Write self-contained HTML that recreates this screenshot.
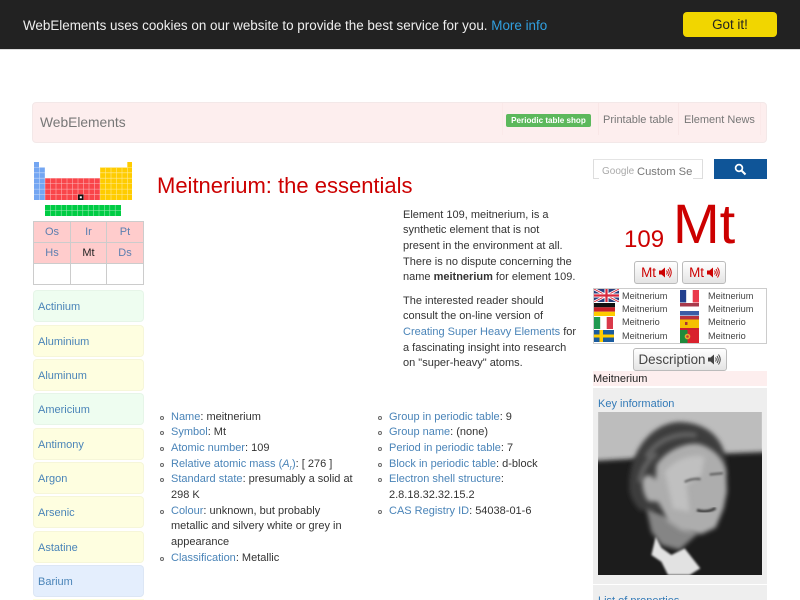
<!DOCTYPE html>
<html lang="en"><head><meta charset="utf-8"><title>Meitnerium: the essentials</title>
<style>
html,body{margin:0;padding:0;background:#fff;width:800px;height:600px;overflow:hidden}
body{font-family:"Liberation Sans",sans-serif;font-size:11px;color:#333;position:relative}
#wrap{position:absolute;left:0;top:0;width:800px;height:600px;overflow:hidden}
a{color:#337ab7;text-decoration:none}
.a{position:absolute;white-space:nowrap}
#bar{position:absolute;left:0;top:0;width:800px;height:49px;background:#222;border-bottom:1px solid #ddd}
#msg{left:23px;font-size:13.43px;color:#eee;line-height:18px}
#msg a{color:#31a0e0}
#got{left:683px;top:12px;width:94px;height:25px;box-sizing:border-box;background:#f1d600;border-radius:4px;text-align:center;line-height:25px;font-size:13.4px;color:#222}
#nav{position:absolute;left:32px;top:102px;width:733px;height:39px;background:#fdeeee;border:1px solid #f3e8e8;border-radius:4px}
.el{position:absolute;left:33px;width:109px;height:30px;border:1px solid rgba(0,0,0,.03);border-radius:4px;font-size:11px;line-height:32px;text-indent:4px;color:#4a84b8}
.pt{position:absolute;left:33px;top:221px;width:109px;height:62px;border:1px solid #ccc;background:#fff}
.c{position:absolute;height:20px;text-align:center;line-height:21.500px;font-size:11px;color:#5c7fb0;border-right:1px solid #ccc;border-bottom:1px solid #ccc;background:#fcc}
ul{position:absolute;margin:0;padding:0;list-style:none;font-size:11px;line-height:15.7px;color:#333}
li{position:relative}
li:before{content:"";position:absolute;left:-11px;top:6px;width:2px;height:2px;border:1px solid #666;border-radius:50%}
li a{color:#4a84b8}
.btn{position:absolute;background:linear-gradient(#fff,#e4e4e4);border:1px solid #bbb;border-radius:3px;box-sizing:border-box;text-align:center;color:#c00;white-space:nowrap}
.fl{position:absolute}
.nm{position:absolute;font-size:9.2px;color:#444;white-space:nowrap;line-height:13px}
</style></head>
<body>
<div id="wrap">
<div id="bar"></div>
<div id="msg" class="a" style="top:16.500px">WebElements uses cookies on our website to provide the best service for you. <a>More info</a></div>
<div id="got" class="a">Got it!</div>

<div id="nav"></div>
<div class="a" style="left:40px;top:114px;font-size:13.8px;color:#777;line-height:17px">WebElements</div>
<div class="a" style="left:506px;top:114px;height:13px;width:85px;background:#5cb85c;border-radius:2px;color:#fff;font-size:8.1px;font-weight:bold;text-align:center;line-height:13px">Periodic table shop</div>
<div class="a" style="left:603px;top:112.500px;font-size:11px;color:#777;line-height:15px">Printable table</div>
<div class="a" style="left:684px;top:112.500px;font-size:11px;color:#777;line-height:15px">Element News</div>
<div class="a" style="left:502px;top:103px;width:1px;height:32px;background:#fbe9e9"></div>
<div class="a" style="left:598px;top:103px;width:1px;height:32px;background:#f9e6e6"></div>
<div class="a" style="left:678px;top:103px;width:1px;height:32px;background:#f9e6e6"></div>
<div class="a" style="left:760px;top:103px;width:1px;height:32px;background:#fbe9e9"></div>

<svg class="a" style="left:34px;top:161px" width="100" height="58" viewBox="0 0 100 58">
<path fill="#74a6f2" d="M0 1h5v5.400H0zM0 6.400h11V39H0z"/>
<path fill="#f9454a" d="M11 17h55v22H11z"/>
<path fill="#fc0" d="M93 1h5v5.500h-5zM66 6.500h32V39H66z"/>
<path fill="#0c4" d="M11 44h76v11H11z"/>
<g stroke="#fff" stroke-width=".55" opacity=".6" fill="none"><path d="M5.500 6v33M11 6v33M16.500 17v22M22 17v22M27.500 17v22M33 17v22M38.500 17v22M44 17v22M49.500 17v22M55 17v22M60.500 17v22M66 7v32M71.500 7v32M77 7v32M82.500 7v32M88 7v32M93.500 1v38M0 6.400h11M66 6.400h32M0 11.800h11M66 11.800h32M0 17.200h98M0 22.600h98M0 28.100h98M0 33.500h98"/><path d="M16.400 44v11M21.800 44v11M27.200 44v11M32.600 44v11M38 44v11M43.400 44v11M48.800 44v11M54.200 44v11M59.600 44v11M65 44v11M70.400 44v11M75.800 44v11M81.200 44v11M11 49.500h76"/></g>
<path fill="#111" d="M44 33.500h5.500V39H44z"/><path fill="#fff" d="M45.800 35.300h2v2h-2z"/></svg>

<div class="pt">
<div class="c" style="left:0;top:0;width:36px">Os</div><div class="c" style="left:37px;top:0;width:35px">Ir</div><div class="c" style="left:73px;top:0;width:36px;border-right:0">Pt</div>
<div class="c" style="left:0;top:21px;width:36px">Hs</div><div class="c" style="left:37px;top:21px;width:35px;color:#222">Mt</div><div class="c" style="left:73px;top:21px;width:36px;border-right:0">Ds</div>
<div class="c" style="left:0;top:42px;width:36px;background:#fff;border-bottom:0"></div><div class="c" style="left:37px;top:42px;width:35px;background:#fff;border-bottom:0"></div><div class="c" style="left:73px;top:42px;width:36px;background:#fff;border:0"></div>
</div>

<div class="el" style="top:290px;background:#eefdf0">Actinium</div>
<div class="el" style="top:324.500px;background:#fefee0">Aluminium</div>
<div class="el" style="top:359px;background:#fefee0">Aluminum</div>
<div class="el" style="top:393px;background:#eefdf0">Americium</div>
<div class="el" style="top:427.500px;background:#fefee0">Antimony</div>
<div class="el" style="top:462px;background:#fefee0">Argon</div>
<div class="el" style="top:496px;background:#fefee0">Arsenic</div>
<div class="el" style="top:530.500px;background:#fefee0">Astatine</div>
<div class="el" style="top:565px;background:#e4eefd">Barium</div>
<div class="a" style="left:33px;top:599px;width:111px;height:1px;background:#fefee0"></div>

<div class="a" style="left:157px;top:172px;font-size:22px;line-height:27px;color:#c00">Meitnerium: the essentials</div>

<div class="a" style="left:403px;top:207.500px;width:176px;font-size:11px;line-height:15.700px;white-space:normal;color:#333">Element 109, meitnerium, is a<br>synthetic element that is not<br>present in the environment at all.<br>There is no dispute concerning the<br>name <b>meitnerium</b> for element 109.</div>
<div class="a" style="left:403px;top:293.500px;width:176px;font-size:11px;line-height:15.700px;white-space:normal;color:#333">The interested reader should<br>consult the on-line version of<br><a style="color:#4a84b8">Creating Super Heavy Elements</a> for<br>a fascinating insight into research<br>on "super-heavy" atoms.</div>

<ul style="left:171px;top:409.500px;width:190px">
<li><a>Name</a>: meitnerium</li>
<li><a>Symbol</a>: Mt</li>
<li><a>Atomic number</a>: 109</li>
<li><a>Relative atomic mass (<i>A</i><sub style="font-size:7px;line-height:0"><i>r</i></sub>)</a>: [ 276 ]</li>
<li><a>Standard state</a>: presumably a solid at<br>298 K</li>
<li><a>Colour</a>: unknown, but probably<br>metallic and silvery white or grey in<br>appearance</li>
<li><a>Classification</a>: Metallic</li>
</ul>
<ul style="left:389px;top:409.500px;width:176px">
<li><a>Group in periodic table</a>: 9</li>
<li><a>Group name</a>: (none)</li>
<li><a>Period in periodic table</a>: 7</li>
<li style="white-space:nowrap"><a>Block in periodic table</a>: d-block</li>
<li><a>Electron shell structure</a>:<br>2.8.18.32.32.15.2</li>
<li><a>CAS Registry ID</a>: 54038-01-6</li>
</ul>

<div class="a" style="left:593px;top:159px;width:108px;height:19px;border-left:1px solid #ddd;border-right:1px solid #ddd;border-top:1px solid #e4e4e4;background:#fff"></div>
<div class="a" style="left:593px;top:178px;width:6px;height:1px;background:#ddd"></div>
<div class="a" style="left:693px;top:178px;width:9px;height:1px;background:#ddd"></div>
<div class="a" style="left:602px;top:165px;font-size:10px;line-height:13px;color:#aaa">Google</div>
<div class="a" style="left:637px;top:165px;font-size:11.200px;line-height:14px;color:#777">Custom Se</div>
<div class="a" style="left:714px;top:159px;width:53px;height:20px;background:#0f5598"></div>
<svg class="a" style="left:734px;top:163px" width="13" height="13" viewBox="0 0 13 13"><circle cx="5" cy="5" r="3.400" fill="none" stroke="#fff" stroke-width="1.700"/><path d="M7.500 7.500L11.500 11.500" stroke="#fff" stroke-width="2"/></svg>

<div class="a" style="left:624px;top:226px;font-size:24px;line-height:28px;color:#c00">109</div>
<div class="a" style="left:673px;top:193px;font-size:56px;line-height:62px;color:#c00">Mt</div>

<div class="btn" style="left:634px;top:261px;width:44px;height:23px;font-size:13.400px;line-height:21px;padding-right:15px">Mt</div>
<svg class="a" style="left:659px;top:266px" width="14" height="13" viewBox="0 0 14 13"><path fill="#c00" d="M0 4.500h2.500L6 1.500v10L2.500 8.500H0z"/><path fill="none" stroke="#c00" stroke-width="1" d="M7.500 4.500q1.500 2 0 4M9 3q2.500 3.500 0 7M10.500 1.500q3.500 5 0 10"/></svg>
<div class="btn" style="left:682px;top:261px;width:44px;height:23px;font-size:13.400px;line-height:21px;padding-right:15px">Mt</div>
<svg class="a" style="left:707px;top:266px" width="14" height="13" viewBox="0 0 14 13"><path fill="#c00" d="M0 4.500h2.500L6 1.500v10L2.500 8.500H0z"/><path fill="none" stroke="#c00" stroke-width="1" d="M7.500 4.500q1.500 2 0 4M9 3q2.500 3.500 0 7M10.500 1.500q3.500 5 0 10"/></svg>

<div class="a" style="left:593px;top:288px;width:172px;height:54px;border:1px solid #ccc;background:#fff"></div>
<svg class="fl" style="left:594px;top:289px" width="25" height="13" viewBox="0 0 25 13"><rect width="25" height="13" fill="#2a3f7e"/><path d="M0 0L25 13M25 0L0 13" stroke="#fff" stroke-width="2.600"/><path d="M0 0L25 13M25 0L0 13" stroke="#d8283c" stroke-width=".9"/><path d="M12.500 0V13M0 6.500H25" stroke="#fff" stroke-width="4"/><path d="M12.500 0V13M0 6.500H25" stroke="#d8283c" stroke-width="2.200"/></svg>
<svg class="fl" style="left:594px;top:303px" width="21" height="13" viewBox="0 0 21 13"><rect width="21" height="4.300" fill="#111"/><rect y="4.300" width="21" height="4.400" fill="#c8202a"/><rect y="8.700" width="21" height="4.300" fill="#fc0"/></svg>
<svg class="fl" style="left:594px;top:317px" width="19" height="12" viewBox="0 0 19 12"><rect width="6.300" height="12" fill="#1f9a50"/><rect x="6.300" width="6.400" height="12" fill="#fff"/><rect x="12.700" width="6.300" height="12" fill="#d9394a"/></svg>
<svg class="fl" style="left:594px;top:330px" width="20" height="12" viewBox="0 0 20 12"><rect width="20" height="12" fill="#1a5c9e"/><rect x="5.500" width="3.500" height="12" fill="#fc0"/><rect y="4.500" width="20" height="3" fill="#fc0"/></svg>
<svg class="fl" style="left:680px;top:290px" width="19" height="17" viewBox="0 0 19 17"><rect width="6.300" height="12.500" fill="#23408f"/><rect x="6.300" width="6.400" height="12.500" fill="#fff"/><rect x="12.700" width="6.300" height="12.500" fill="#ea3a4c"/><rect y="13" width="19" height="3.500" fill="#a83a4c"/></svg>
<svg class="fl" style="left:680px;top:311px" width="19" height="19" viewBox="0 0 19 19"><rect width="19" height="4.500" fill="#3b5da6"/><rect y="5" width="19" height="3.500" fill="#b8323e"/><rect y="8.500" width="19" height="8.500" fill="#f5c000"/><rect y="17" width="19" height="2" fill="#c9202c"/><rect x="5" y="11" width="2.500" height="3" fill="#a33"/></svg>
<svg class="fl" style="left:680px;top:330px" width="19" height="13" viewBox="0 0 19 13"><rect width="7.500" height="13" fill="#1f8a3c"/><rect x="7.500" width="11.500" height="13" fill="#d9222e"/><circle cx="7.500" cy="6.500" r="2.800" fill="#e0b030"/><circle cx="7.500" cy="6.500" r="1.300" fill="#c33"/></svg>
<div class="nm" style="left:622px;top:290px">Meitnerium</div><div class="nm" style="left:708px;top:290px">Meitnerium</div>
<div class="nm" style="left:622px;top:303px">Meitnerium</div><div class="nm" style="left:708px;top:303px">Meitnerium</div>
<div class="nm" style="left:622px;top:316px">Meitnerio</div><div class="nm" style="left:708px;top:316px">Meitnerio</div>
<div class="nm" style="left:622px;top:330px">Meitnerium</div><div class="nm" style="left:708px;top:330px">Meitnerio</div>

<div class="btn" style="left:633px;top:348px;width:94px;height:23px;font-size:13.400px;line-height:21px;color:#444;padding-right:16px">Description</div>
<svg class="a" style="left:708px;top:353px" width="14" height="13" viewBox="0 0 14 13"><path fill="#444" d="M0 4.500h2.500L6 1.500v10L2.500 8.500H0z"/><path fill="none" stroke="#444" stroke-width="1" d="M7.500 4.500q1.500 2 0 4M9 3q2.500 3.500 0 7M10.500 1.500q3.500 5 0 10"/></svg>

<div class="a" style="left:593px;top:371px;width:174px;height:15px;background:#fdeeee;font-size:11px;line-height:15px;color:#222"><span style="position:relative;top:.5px">Meitnerium</span></div>

<div class="a" style="left:593px;top:388px;width:174px;height:196px;background:#eee"></div>
<div class="a" style="left:598px;top:397px;font-size:11px;line-height:15px;color:#337ab7">Key information</div>
<svg class="a" style="left:598px;top:412px" width="164" height="163" viewBox="25 80 492 490">
<defs><filter id="b" x="-20%" y="-20%" width="140%" height="140%"><feGaussianBlur stdDeviation="7"/></filter><filter id="s" x="-20%" y="-20%" width="140%" height="140%"><feGaussianBlur stdDeviation="3"/></filter></defs>
<rect x="25" y="80" width="492" height="490" fill="#bdbdbd"/>
<path d="M0 228L400 205 540 200V600H0z" fill="#1b1b1b" filter="url(#b)"/>
<path d="M118 300C120 190 190 112 270 110 345 112 398 150 410 225L412 270 300 190 230 240 215 380 150 375C128 350 118 330 118 300z" fill="#3e3e3e" filter="url(#b)"/>
<path d="M170 215C200 165 260 140 320 150M150 290C155 250 175 225 200 205" stroke="#666" stroke-width="14" fill="none" filter="url(#b)"/>
<path d="M170 370L245 400 325 445 270 495 215 480 185 440z" fill="#858585" filter="url(#b)"/>
<path d="M158 290C160 268 182 262 198 285L200 240C225 200 280 172 325 176 372 186 406 225 410 262L412 320 402 370 378 428 335 447 275 436 235 410 205 350 175 348C163 330 158 310 158 290z" fill="#adadad" filter="url(#b)"/>
<path d="M225 260C255 225 300 205 345 215L335 270 290 300 300 380 250 370z" fill="#c0c0c0" filter="url(#b)"/>
<path d="M285 290q25-12 48-8M360 268l40-4" stroke="#555" stroke-width="6" fill="none" filter="url(#s)"/>
<path d="M322 375q28 10 56-6" stroke="#333" stroke-width="8" fill="none" filter="url(#s)"/>
<path d="M198 455L215 488 245 510 285 490 332 550 300 570H235L215 530 185 510z" fill="#e2e2e2" filter="url(#s)"/>
</svg>

<div class="a" style="left:593px;top:585px;width:174px;height:15px;background:#eee;overflow:hidden"></div>
<div class="a" style="left:598px;top:594px;font-size:11px;line-height:15px;color:#337ab7;height:6px;overflow:hidden">List of properties</div>
</div>
</body></html>
